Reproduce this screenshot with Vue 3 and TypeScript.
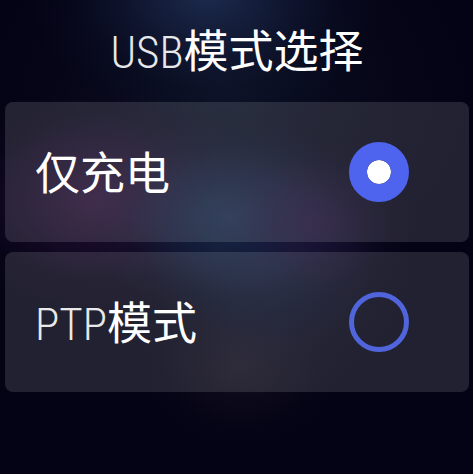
<script setup lang="ts">
import { ref } from 'vue'

interface Mode {
  id: string
  latin: string
  text: string
}

const modes: Mode[] = [
  { id: 'charge', latin: '', text: '仅充电' },
  { id: 'ptp', latin: 'PTP', text: '模式' },
]

const selected = ref('charge')
</script>

<template>
  <main class="screen">
    <h1 class="title"><span class="latin">USB</span>模式选择</h1>
    <div class="list" role="radiogroup" aria-label="USB模式选择">
      <label v-for="mode in modes" :key="mode.id" class="card">
        <span class="name"><span v-if="mode.latin" class="latin">{{ mode.latin }}</span>{{ mode.text }}</span>
        <input v-model="selected" class="radio" type="radio" name="usb-mode" :value="mode.id" />
      </label>
    </div>
  </main>
</template>

<style>
body {
  margin: 0;
  background: #040315;
}
</style>

<style scoped>
.screen {
  box-sizing: border-box;
  min-height: 100vh;
  padding: 0 4px 24px 5px;
  color: #fff;
  font-family: 'Roboto Condensed', 'Noto Sans CJK SC', sans-serif;
  font-size: 45px;
  line-height: 60px;
  background:
    radial-gradient(ellipse 38% 26% at 44% -1%, rgba(30, 46, 82, 0.9), rgba(27, 40, 76, 0.4) 45%, rgba(24, 36, 70, 0.1) 75%, transparent),
    radial-gradient(ellipse 22% 18% at 66% 47%, rgba(36, 18, 58, 0.7), rgba(34, 17, 56, 0.35) 45%, rgba(28, 15, 50, 0.1) 75%, transparent),
    radial-gradient(ellipse 30% 22% at 49% 46%, rgba(24, 43, 74, 0.95), rgba(24, 40, 72, 0.5) 45%, rgba(22, 36, 66, 0.12) 75%, transparent),
    radial-gradient(ellipse 34% 24% at 21% 42%, rgba(45, 18, 58, 0.85), rgba(40, 18, 56, 0.45) 45%, rgba(34, 16, 50, 0.12) 75%, transparent),
    radial-gradient(ellipse 32% 28% at 56% 56%, rgba(14, 24, 52, 0.75), rgba(13, 21, 48, 0.4) 45%, rgba(12, 18, 42, 0.1) 75%, transparent),
    radial-gradient(ellipse 22% 18% at 51% 77%, rgba(22, 17, 32, 0.8), rgba(20, 16, 31, 0.4) 45%, rgba(16, 13, 29, 0.1) 75%, transparent),
    radial-gradient(ellipse 54% 42% at 48% 20%, rgba(16, 25, 46, 0.65), rgba(14, 21, 40, 0.3) 45%, rgba(12, 17, 36, 0.1) 75%, transparent),
    #040315;
}

.title {
  margin: 0;
  padding: 23px 0 19px;
  font-size: 45px;
  font-weight: 400;
  line-height: 60px;
  text-align: center;
}

.latin {
  font-weight: 300;
  opacity: 0.9;
}

.list {
  display: flex;
  flex-direction: column;
  gap: 10px;
}

.card {
  display: flex;
  align-items: center;
  justify-content: space-between;
  box-sizing: border-box;
  min-height: 140px;
  padding: 0 60px 0 30px;
  border-radius: 8px;
  background: rgba(255, 255, 255, 0.12);
  cursor: pointer;
}

.name {
  padding-top: 6px;
}

.radio {
  appearance: none;
  flex: none;
  box-sizing: border-box;
  width: 60px;
  height: 60px;
  margin: 0;
  border: 5px solid #5065dc;
  border-radius: 50%;
  cursor: pointer;
}

.radio:checked {
  border: 18px solid #4e64ee;
  background: #fff;
  background-clip: padding-box;
}
</style>
